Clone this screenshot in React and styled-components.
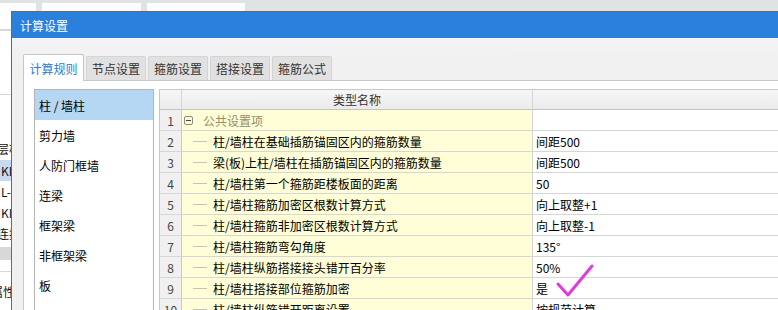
import React from 'react';
import styled, { createGlobalStyle } from 'styled-components';

const GlobalStyle = createGlobalStyle`
  html, body {
    margin: 0;
    padding: 0;
  }
  body {
    width: 778px;
    height: 310px;
    overflow: hidden;
    background: #f0f0f0;
    font-family: "Noto Sans CJK SC", "Liberation Sans", sans-serif;
    font-size: 12px;
    color: #000;
  }
`;

const Screen = styled.div`
  position: relative;
  width: 778px;
  height: 310px;
  overflow: hidden;
  display: flex;
  flex-direction: column;
  background: #eceff1;
`;

const TopStrip = styled.div`
  height: 11px;
  flex-shrink: 0;
  display: flex;
  align-items: flex-end;
  gap: 6px;
  background: #dfe3e5;
`;

const StripBox = styled.div`
  width: ${(p) => p.w}px;
  height: 8px;
  background: #fff;
`;

const MainRow = styled.div`
  flex: 1;
  display: flex;
  min-height: 0;
`;

const BackApp = styled.div`
  width: 11px;
  flex-shrink: 0;
  overflow: hidden;
  display: flex;
  flex-direction: column;
  background: #fff;
`;

const BackRow = styled.div`
  height: ${(p) => p.h}px;
  flex-shrink: 0;
  background: ${(p) => p.bg || '#fff'};
  display: flex;
  align-items: center;
  white-space: nowrap;
  font-size: 12px;
  color: #111;
  span {
    margin-left: ${(p) => p.offset || 0}px;
  }
`;

const Dialog = styled.div`
  flex: 1;
  display: flex;
  flex-direction: column;
  border-top: 1px solid #6a6a6a;
  border-left: 1px solid #6a6a6a;
  background: #f0f0f0;
  min-width: 0;
`;

const TitleBar = styled.div`
  height: 26px;
  flex-shrink: 0;
  background: #2c80dd;
  color: #fff;
  padding-left: 8px;
  display: flex;
  align-items: center;
  font-size: 12px;
`;

const DialogBody = styled.div`
  flex: 1;
  display: flex;
  flex-direction: column;
  padding: 16px 0 0 11px;
  background: linear-gradient(#f3f3f7, #f0f0f0 30px);
`;

const TabBar = styled.div`
  height: 26px;
  display: flex;
  align-items: flex-end;
  gap: 2px;
  position: relative;
  z-index: 1;
`;

const Tab = styled.div`
  box-sizing: border-box;
  width: ${(p) => (p.active ? 61 : 60)}px;
  height: ${(p) => (p.active ? 27 : 24)}px;
  margin-bottom: ${(p) => (p.active ? -1 : 0)}px;
  display: flex;
  align-items: center;
  justify-content: center;
  background: ${(p) => (p.active ? '#fff' : '#e1e1e1')};
  border: 1px solid ${(p) => (p.active ? '#c6c6c6' : '#d4d4d4')};
  border-bottom: none;
  border-radius: 2px 2px 0 0;
  color: ${(p) => (p.active ? '#2a7bd5' : '#333')};
  font-size: 12px;
`;

const Pane = styled.div`
  flex: 1;
  display: flex;
  align-items: flex-start;
  gap: 5px;
  padding: 8px 0 0 10px;
  background: #fff;
  border-top: 1px solid #c8c8c8;
  border-left: 1px solid #c8c8c8;
`;

const RuleList = styled.div`
  box-sizing: border-box;
  width: 120px;
  height: 240px;
  flex-shrink: 0;
  border: 1px solid #b4b4b4;
  background: #fff;
  display: flex;
  flex-direction: column;
`;

const RuleItem = styled.div`
  height: 30px;
  flex-shrink: 0;
  display: flex;
  align-items: center;
  padding-left: 4px;
  background: ${(p) => (p.selected ? '#b6d7f3' : 'transparent')};
  color: #000;
`;

const Grid = styled.div`
  flex-shrink: 0;
  width: 700px;
  border-top: 1px solid #c8c8c8;
  border-left: 1px solid #c8c8c8;
`;

const GridRow = styled.div`
  display: grid;
  grid-template-columns: 22px 351px 1fr;
  height: ${(p) => (p.head ? 20 : 21)}px;
`;

const Cell = styled.div`
  box-sizing: border-box;
  display: flex;
  align-items: center;
  border-right: 1px solid #d4d4d4;
  border-bottom: 1px solid #d6d6d6;
  white-space: nowrap;
  overflow: hidden;
`;

const NumCell = styled(Cell)`
  justify-content: center;
  background: #f0f0f0;
  color: #444;
  border-right-color: #c8c8c8;
`;

const HeadCell = styled(Cell)`
  justify-content: center;
  background: linear-gradient(#f7f7f7, #ebebeb);
  color: #333;
  border-bottom-color: #c4c4c4;
`;

const NameCell = styled(Cell)`
  background: #fffed6;
  color: ${(p) => (p.group ? '#938f6e' : '#000')};
`;

const ValueCell = styled(Cell)`
  background: #fff;
  padding-left: 3px;
`;

const Toggle = styled.span`
  box-sizing: border-box;
  width: 9px;
  height: 9px;
  margin: 0 10px 0 2px;
  border: 1px solid #8a8a8a;
  border-radius: 2px;
  display: flex;
  align-items: center;
  justify-content: center;
  &::after {
    content: '';
    width: 5px;
    height: 1px;
    background: #444;
  }
`;

const TreeDash = styled.span`
  width: 14px;
  height: 1px;
  margin: 0 6px 0 11px;
  background: #c2c2c2;
  flex-shrink: 0;
`;

const CheckMark = styled.svg`
  position: absolute;
  left: 550px;
  top: 258px;
  width: 50px;
  height: 44px;
  pointer-events: none;
`;

const tabs = ['计算规则', '节点设置', '箍筋设置', '搭接设置', '箍筋公式'];

const rules = ['柱 / 墙柱', '剪力墙', '人防门框墙', '连梁', '框架梁', '非框架梁', '板', '基础'];

const rows = [
  { name: '公共设置项', value: '', group: true },
  { name: '柱/墙柱在基础插筋锚固区内的箍筋数量', value: '间距500' },
  { name: '梁(板)上柱/墙柱在插筋锚固区内的箍筋数量', value: '间距500' },
  { name: '柱/墙柱第一个箍筋距楼板面的距离', value: '50' },
  { name: '柱/墙柱箍筋加密区根数计算方式', value: '向上取整+1' },
  { name: '柱/墙柱箍筋非加密区根数计算方式', value: '向上取整-1' },
  { name: '柱/墙柱箍筋弯勾角度', value: '135°' },
  { name: '柱/墙柱纵筋搭接接头错开百分率', value: '50%' },
  { name: '柱/墙柱搭接部位箍筋加密', value: '是' },
  { name: '柱/墙柱纵筋错开距离设置', value: '按规范计算' },
];

const backRows = [
  { h: 18 },
  { h: 2, bg: '#d3d7d9' },
  { h: 63 },
  { h: 1, bg: '#d8d8d8' },
  { h: 44 },
  { h: 19, text: '层柱', offset: -3 },
  { h: 2 },
  { h: 21, text: 'KL', bg: '#c8daef', offset: 1 },
  { h: 20, text: 'L-', offset: 1 },
  { h: 22, text: 'KL', offset: 1 },
  { h: 20, text: '连接', offset: -3 },
  { h: 4 },
  { h: 13, bg: '#d6d8da' },
  { h: 11 },
  { h: 1, bg: '#d8d8d8' },
  { h: 38, text: '属性', offset: -9 },
];

export default function App() {
  return (
    <>
      <GlobalStyle />
      <Screen>
        <TopStrip>
          <StripBox w={36} />
          <StripBox w={99} />
          <StripBox w={98} />
        </TopStrip>
        <MainRow>
          <BackApp>
            {backRows.map((r, i) => (
              <BackRow key={i} h={r.h} bg={r.bg} offset={r.offset}>
                {r.text && <span>{r.text}</span>}
              </BackRow>
            ))}
          </BackApp>
          <Dialog>
            <TitleBar>计算设置</TitleBar>
            <DialogBody>
              <TabBar>
                {tabs.map((t, i) => (
                  <Tab key={t} active={i === 0}>
                    {t}
                  </Tab>
                ))}
              </TabBar>
              <Pane>
                <RuleList>
                  {rules.map((r, i) => (
                    <RuleItem key={r} selected={i === 0}>
                      {r}
                    </RuleItem>
                  ))}
                </RuleList>
                <Grid>
                  <GridRow head>
                    <HeadCell />
                    <HeadCell>类型名称</HeadCell>
                    <HeadCell />
                  </GridRow>
                  {rows.map((r, i) => (
                    <GridRow key={i}>
                      <NumCell>{i + 1}</NumCell>
                      <NameCell group={r.group}>
                        {r.group ? <Toggle /> : <TreeDash />}
                        {r.name}
                      </NameCell>
                      <ValueCell>{r.value}</ValueCell>
                    </GridRow>
                  ))}
                </Grid>
              </Pane>
            </DialogBody>
          </Dialog>
        </MainRow>
        <CheckMark viewBox="550 258 50 44">
          <path
            d="M558 284 L568 295 L592 266"
            fill="none"
            stroke="#e03be0"
            strokeWidth="3"
            strokeLinecap="round"
            strokeLinejoin="round"
          />
        </CheckMark>
      </Screen>
    </>
  );
}
